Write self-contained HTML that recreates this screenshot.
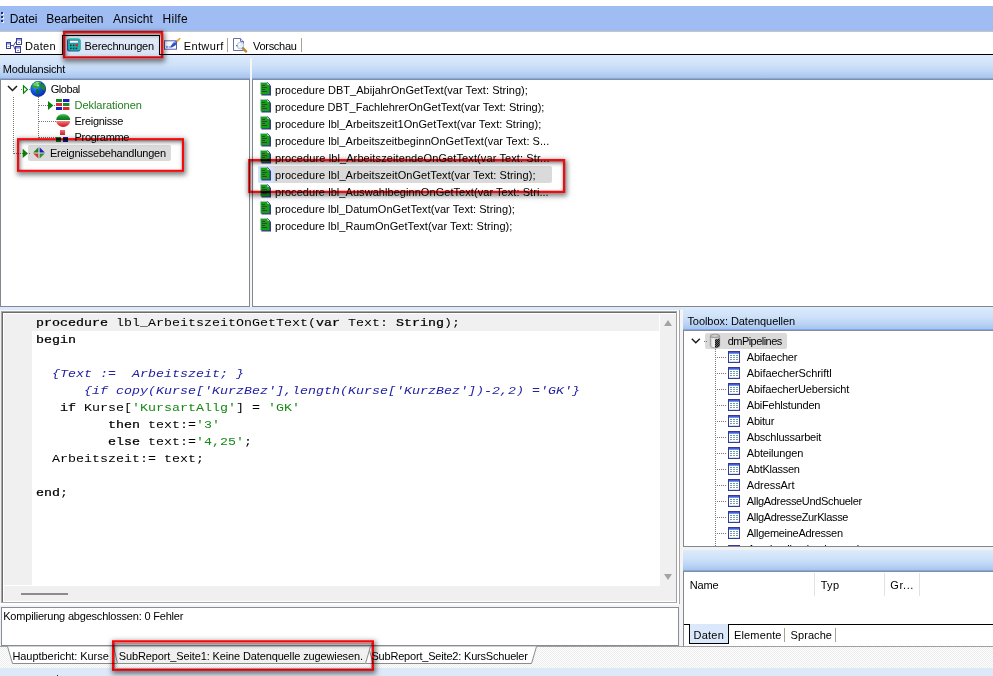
<!DOCTYPE html>
<html>
<head>
<meta charset="utf-8">
<title>Berechnungen</title>
<style>
*{box-sizing:border-box;margin:0;padding:0}
html,body{width:993px;height:676px;overflow:hidden;background:#fff}
body{position:relative;font-family:"Liberation Sans",sans-serif;font-size:11px;color:#000}
.a{position:absolute}
.t{position:absolute;white-space:nowrap;line-height:16px;height:16px;font-size:11px}
.hdr{position:absolute;background:linear-gradient(#deecfd 0%,#d7e8fb 14%,#cfe2f9 40%,#bdd5f5 70%,#a9c7f0 92%,#a3c2ef 95.5%,#7fa9ea 96%,#7fa9ea 100%);border-bottom:1px solid #8a8c94}
.dots{background-image:conic-gradient(#ececec 25%,#fff 0 50%,#ececec 0 75%,#fff 0);background-size:2px 2px}
.code{position:absolute;left:36px;white-space:pre;font-family:"Liberation Mono",monospace;font-size:13.33px;line-height:17px;height:17px;color:#000;transform:scaleY(.86);transform-origin:0 12.5px}
.k{-webkit-text-stroke:.28px #000}
.c{color:#2222a4;font-style:italic}
.s{color:#158a15}
.vd{position:absolute;width:1px;background-image:linear-gradient(#7a7a7a 50%,transparent 50%);background-size:1px 2px}
.hd{position:absolute;height:1px;background-image:linear-gradient(90deg,#7a7a7a 50%,transparent 50%);background-size:2px 1px}
.sh{position:absolute;box-shadow:1px 2px 5px 1px rgba(0,0,0,.5)}
.ish{position:absolute;box-shadow:inset 1px 2px 4px rgba(0,0,0,.55)}
.in{position:absolute}
</style>
</head>
<body>

<!-- ===== menu bar ===== -->
<div class="a" style="left:0;top:6px;width:993px;height:25px;background:#9fbdf3"></div>
<div class="a" style="left:0;top:31px;width:993px;height:1px;background:#c9c6c0"></div>
<div class="a" style="left:2px;top:13px;width:2px;height:2px;background:#eef3fd"></div><div class="a" style="left:1px;top:12px;width:2px;height:2px;background:#1f2f70"></div>
<div class="a" style="left:2px;top:17px;width:2px;height:2px;background:#eef3fd"></div><div class="a" style="left:1px;top:16px;width:2px;height:2px;background:#1f2f70"></div>
<div class="a" style="left:2px;top:21px;width:2px;height:2px;background:#eef3fd"></div><div class="a" style="left:1px;top:20px;width:2px;height:2px;background:#1f2f70"></div>
<div class="t" style="left:9.7px;top:10.6px;letter-spacing:-0.075px;font-size:12px">Datei</div><div class="t" style="left:46.3px;top:10.6px;letter-spacing:-0.089px;font-size:12px">Bearbeiten</div><div class="t" style="left:113px;top:10.6px;letter-spacing:0.1px;font-size:12px">Ansicht</div><div class="t" style="left:162.5px;top:10.6px;letter-spacing:0.275px;font-size:12px">Hilfe</div>

<!-- ===== toolbar ===== -->
<div class="a" style="left:0;top:54px;width:993px;height:1px;background:#000"></div>
<!-- Daten icon -->
<svg class="a" style="left:5px;top:37px" width="18" height="17" viewBox="0 0 18 17">
 <path d="M6 8.5H8.5L11 4.5M8.5 8.5L10 12.5" stroke="#4a4a8a" stroke-width="1" fill="none"/>
 <rect x="1.5" y="5.5" width="4" height="6" fill="#fff" stroke="#3c3c96"/><rect x="2" y="6" width="3" height="1.6" fill="#8c9be0"/><rect x="2.5" y="9" width="2" height="1" fill="#7e93dc"/>
 <rect x="11.5" y="1.5" width="5" height="6" fill="#fff" stroke="#3c3c96"/><rect x="12" y="2" width="4" height="1.6" fill="#8c9be0"/><rect x="13" y="5" width="2" height="1" fill="#7e93dc"/>
 <rect x="10.5" y="9.5" width="5" height="6" fill="#fff" stroke="#3c3c96"/><rect x="11" y="10" width="4" height="1.6" fill="#8c9be0"/><rect x="12" y="13" width="2" height="1" fill="#7e93dc"/>
</svg>
<div class="t" style="left:25px;top:38px;letter-spacing:0.3px">Daten</div>
<!-- selected tab Berechnungen -->
<div class="a" style="left:62px;top:35px;width:98px;height:20px;border:1px solid #000;border-bottom:0;background:linear-gradient(#e3ebf9,#d9e3f5)"></div>
<!-- calc icon -->
<svg class="a" style="left:66px;top:38px" width="15" height="14" viewBox="0 0 15 14">
 <rect x="1" y="0.8" width="13.4" height="12.7" rx="2" fill="#2f4a9a"/>
 <rect x="2" y="0.6" width="12.6" height="11.9" rx="1.8" fill="#17b9b1"/>
 <rect x="3.4" y="2.4" width="9" height="2.6" fill="#fff" stroke="#3a4a8a" stroke-width=".5"/>
 <g fill="#1a2a44"><rect x="4" y="6.6" width="1.6" height="1.6"/><rect x="6.8" y="6.6" width="1.6" height="1.6"/><rect x="4" y="9.6" width="1.6" height="1.6"/><rect x="6.8" y="9.6" width="1.6" height="1.6"/><rect x="9.6" y="9.6" width="1.6" height="1.6"/></g>
 <rect x="9.4" y="6.2" width="2.6" height="2.2" fill="#f01818"/>
</svg>
<div class="t" style="left:84.6px;top:38px;letter-spacing:-0.182px">Berechnungen</div>
<!-- Entwurf icon -->
<svg class="a" style="left:163px;top:37px" width="18" height="15" viewBox="0 0 18 15">
 <rect x="1.5" y="3.8" width="12" height="8.4" fill="#fff" stroke="#5a5cae"/>
 <rect x="3" y="9" width="1.8" height="1.8" fill="#5aa0e0"/><rect x="5.6" y="9" width="1.6" height="1.8" fill="#9ac4ee"/>
 <path d="M6.6 10.4 C8 9.6 8.6 7.4 10.4 5.6 C11.6 4.4 13.2 3.8 14.2 4.2 C14.4 5.6 13.6 7.2 12.2 8.4 C10.6 9.8 8.6 10.6 6.6 10.4Z" fill="#2c54cc"/>
 <path d="M10.6 6.2C11.4 5.4 12.4 5 13.2 5" stroke="#9ab4f0" stroke-width=".8" fill="none"/>
 <path d="M13 3.8 L15.8 1.2 L17.2 2.4 L14.4 5.2Z" fill="#f0b030"/>
 <path d="M15.8 1.2 L17.2 2.4 L17.4 1Z" fill="#d07818"/>
</svg>
<div class="t" style="left:183.7px;top:38px;letter-spacing:0.383px">Entwurf</div>
<div class="a" style="left:227px;top:38px;width:1px;height:14px;background:#a8a294"></div>
<!-- Vorschau icon -->
<svg class="a" style="left:232px;top:37px" width="17" height="17" viewBox="0 0 17 17">
 <path d="M1.5 1.5H8.5L11.5 4.5V13.5H1.5Z" fill="#fff" stroke="#6a6cae"/>
 <path d="M8.5 1.5V4.5H11.5" fill="#dfe3f5" stroke="#6a6cae"/>
 <circle cx="8.4" cy="8.6" r="3.4" fill="#dff0fb" stroke="#b9c6dc" stroke-width="1"/>
 <circle cx="7.4" cy="7.6" r="1.1" fill="#fff"/>
 <rect x="4.2" y="8" width="1.2" height="1.2" fill="#555"/>
 <path d="M11 11.4 L14 14.4" stroke="#d08428" stroke-width="2.6" stroke-linecap="round"/>
 <path d="M10.2 10.6 L11.6 12" stroke="#8a8a8a" stroke-width="1.6"/>
</svg>
<div class="t" style="left:253px;top:38px;letter-spacing:-0.286px">Vorschau</div>
<div class="a" style="left:301px;top:38px;width:1px;height:14px;background:#a8a294"></div>

<!-- ===== panel headers ===== -->
<div class="hdr" style="left:0;top:55px;width:993px;height:25px"></div>
<div class="a" style="left:250px;top:58px;width:2px;height:249px;background:#f6f6f6"></div>
<div class="t" style="left:2.8px;top:61px;letter-spacing:-0.209px">Modulansicht</div>

<!-- left tree panel -->
<div class="a" style="left:0;top:80px;width:250px;height:227px;border:1px solid #828790;border-top:0;background:#fff"></div>
<!-- right list panel -->
<div class="a" style="left:252px;top:80px;width:743px;height:227px;border:1px solid #828790;border-top:0;background:#fff"></div>
<!-- splitter strip below -->
<div class="a" style="left:0;top:307px;width:993px;height:4px;background:#dde8f9"></div>

<!-- ===== tree content ===== -->
<svg class="a" style="left:7px;top:85px" width="11" height="7" viewBox="0 0 11 7"><path d="M1 1L5.5 5.5L10 1" stroke="#1a1a1a" stroke-width="1.5" fill="none"/></svg>
<div class="vd" style="left:13px;top:97px;height:57px"></div>
<div class="hd" style="left:14px;top:153px;width:9px"></div>
<div class="hd" style="left:21px;top:89px;width:1px"></div><div class="hd" style="left:29px;top:89px;width:1px"></div>
<svg class="a" style="left:22px;top:84px" width="7" height="11" viewBox="0 0 7 11"><path d="M1.5 1.8V9.2L5.5 5.5Z" fill="#fff" stroke="#008000" stroke-width="1.1"/></svg>
<!-- globe -->
<svg class="a" style="left:30px;top:80px" width="17" height="18" viewBox="0 0 17 18">
 <defs><radialGradient id="gl" cx="36%" cy="34%" r="72%"><stop offset="0" stop-color="#4a9af4"/><stop offset=".5" stop-color="#0c56d8"/><stop offset=".85" stop-color="#0a36b4"/><stop offset="1" stop-color="#0a2a8a"/></radialGradient>
 <clipPath id="gc"><circle cx="8.2" cy="9" r="7.7"/></clipPath></defs>
 <circle cx="8.2" cy="9" r="7.9" fill="url(#gl)"/>
 <g clip-path="url(#gc)">
  <path d="M1.8 6C2.6 3.2 5.4 1.2 8.6 1.2C10.4 1.2 11.2 2.2 10.8 3.6C10.4 5 9.6 5.6 9.4 6.8C9.2 8 8.2 8.8 7.2 8.2C6.2 7.6 5.6 8.4 4.4 8C3.2 7.6 2.2 7 1.8 6Z" fill="#27a82c"/>
  <ellipse cx="5.8" cy="4.2" rx="2.6" ry="1.7" fill="#7fdc74" opacity=".75"/>
  <ellipse cx="7.6" cy="2.6" rx="1.8" ry=".8" fill="#bfe8d0" opacity=".7"/>
  <circle cx="8" cy="5.4" r=".9" fill="#cfdcff"/>
  <path d="M10.8 4.4C12.4 3.4 14.2 4.4 15.2 6.4C15.8 8 15.6 9.6 14.6 10.6C13.6 9.6 12.6 9.8 11.6 9C10.4 8 10.2 5.8 10.8 4.4Z" fill="#1c8a2a"/>
  <path d="M6.4 9.6C7.6 9 9 9.6 9 10.8C9 12.2 8.4 13.6 7.4 14C6.6 13 6 11 6.4 9.6Z" fill="#0b741c"/>
 </g>
</svg>
<div class="t" style="left:50.7px;top:81px;letter-spacing:-0.44px">Global</div>
<div class="vd" style="left:38px;top:97px;height:41px"></div>
<div class="hd" style="left:39px;top:105px;width:9px"></div><div class="hd" style="left:54px;top:105px;width:1px"></div>
<svg class="a" style="left:47px;top:100px" width="7" height="11" viewBox="0 0 7 11"><path d="M1 1V10L6.4 5.5Z" fill="#0a800a"/></svg>
<!-- Deklarationen icon -->
<svg class="a" style="left:56px;top:99px" width="14" height="12" viewBox="0 0 14 12">
 <rect x="0" y="0" width="6" height="3" fill="#1a8a2a"/><rect x="7" y="0" width="6.4" height="3" fill="#1c1cc0"/>
 <rect x="0" y="4" width="6" height="3" fill="#e02828"/><rect x="7" y="4" width="6.4" height="3" fill="#1a8a2a"/>
 <rect x="0" y="8" width="6" height="3" fill="#1c1cc0"/><rect x="7" y="8" width="6.4" height="3" fill="#e02828"/>
</svg>
<div class="t" style="left:74.5px;top:97px;letter-spacing:-0.042px;color:#1f7d1f">Deklarationen</div>
<div class="hd" style="left:39px;top:121px;width:17px"></div>
<!-- Ereignisse icon -->
<svg class="a" style="left:56px;top:113px" width="15" height="15" viewBox="0 0 15 15">
 <defs><linearGradient id="eg" x1="0" y1="0" x2="0" y2="1"><stop offset="0" stop-color="#7fd08a"/><stop offset=".2" stop-color="#1a9a30"/><stop offset=".45" stop-color="#0a7a1a"/><stop offset=".46" stop-color="#fff"/><stop offset=".54" stop-color="#fff"/><stop offset=".55" stop-color="#f08090"/><stop offset=".8" stop-color="#e03a40"/><stop offset="1" stop-color="#c82028"/></linearGradient></defs>
 <ellipse cx="7.2" cy="7.4" rx="7.1" ry="6.6" fill="url(#eg)"/>
</svg>
<div class="t" style="left:74.5px;top:113px;letter-spacing:-0.289px">Ereignisse</div>
<div class="hd" style="left:39px;top:137px;width:17px"></div>
<!-- Programme icon -->
<div class="a" style="left:60px;top:130px;width:5px;height:5px;background:linear-gradient(#f07078,#d02028)"></div>
<div class="t" style="left:74.6px;top:129px;letter-spacing:-0.325px">Programme</div>

<!-- ===== list content ===== -->
<svg width="0" height="0" style="position:absolute"><defs>
 <g id="pi"><path d="M1.4 1.4H8.2L11 4.2V13.6H1.4Z" fill="#37378c"/><path d="M0.5 0.5H7.6L9.5 2.4V12.3H0.5Z" fill="#10a410"/><path d="M0.3 12.4V0.3H7.4" stroke="#c6c2ee" stroke-width=".6" fill="none"/><path d="M7.4 0.5L9.6 2.7H7.4Z" fill="#eeeeff"/><path d="M7.4 0.4L10.4 3.4" stroke="#37378c" stroke-width=".8"/><path d="M2 3.5H5M2 5.5H7M2 7.5H5M2 9.5H7" stroke="#3a3f3a" stroke-width="1"/></g>
 <g id="ti"><rect x="0.5" y="0.5" width="11" height="11" fill="#fff" stroke="#38389a"/><rect x="1" y="1" width="10" height="1" fill="#3a62d4"/><rect x="1" y="2" width="10" height="1" fill="#6f96ea"/><g fill="#8e8e98"><rect x="2" y="4" width="2" height="1"/><rect x="5" y="4" width="2" height="1"/><rect x="8" y="4" width="2" height="1"/><rect x="2" y="8" width="2" height="1"/></g><g fill="#62aaa8"><rect x="5" y="6" width="2" height="1"/><rect x="8" y="6" width="2" height="1"/><rect x="5" y="8" width="2" height="1"/></g><rect x="2" y="6" width="2" height="1" fill="#5f98e4"/><rect x="8" y="8" width="2" height="1" fill="#8a86c8"/><rect x="1" y="10" width="10" height="1" fill="#cfeadb"/></g>
</defs></svg>
<svg class="a" style="left:260px;top:82px" width="12" height="152" viewBox="0 0 12 152">
 <use href="#pi" y="0"/><use href="#pi" y="17"/><use href="#pi" y="34"/><use href="#pi" y="51"/><use href="#pi" y="68"/><use href="#pi" y="102"/><use href="#pi" y="119"/><use href="#pi" y="136"/>
</svg>
<div class="t" style="left:275px;top:82px;letter-spacing:0.037px">procedure DBT_AbijahrOnGetText(var Text: String);</div>
<div class="t" style="left:275px;top:99px;letter-spacing:0.0px">procedure DBT_FachlehrerOnGetText(var Text: String);</div>
<div class="t" style="left:275px;top:116px;letter-spacing:0.057px">procedure lbl_Arbeitszeit1OnGetText(var Text: String);</div>
<div class="t" style="left:275px;top:133px;letter-spacing:0.056px">procedure lbl_ArbeitszeitbeginnOnGetText(var Text: S...</div>
<div class="t" style="left:275px;top:150px;letter-spacing:0.104px">procedure lbl_ArbeitszeitendeOnGetText(var Text: Str...</div>
<div class="t" style="left:275px;top:184px;letter-spacing:0.057px">procedure lbl_AuswahlbeginnOnGetText(var Text: Stri...</div>
<div class="t" style="left:275px;top:201px;letter-spacing:0.037px">procedure lbl_DatumOnGetText(var Text: String);</div>
<div class="t" style="left:275px;top:218px;letter-spacing:0.049px">procedure lbl_RaumOnGetText(var Text: String);</div>

<!-- ===== code editor ===== -->
<div class="a" style="left:0;top:311px;width:683px;height:336px;background:#f0f0f0"></div>
<div class="a" style="left:0;top:310px;width:683px;height:1px;background:#f6f9fe"></div>
<div class="a" style="left:1px;top:311px;width:676px;height:292px;background:#fff;border-left:1px solid #a6a6a6;border-top:1px solid #a6a6a6;border-right:1px solid #a0a0a0;border-bottom:1px solid #a6a6a6"></div>
<div class="a" style="left:2px;top:312px;width:674px;height:1px;background:#6c6c6c"></div>
<div class="a" style="left:2px;top:312px;width:1px;height:290px;background:#6c6c6c"></div>
<div class="a" style="left:4px;top:314px;width:28px;height:271px;background:#f0f0f0"></div>
<div class="a" style="left:4px;top:314px;width:655px;height:17px;background:#f0f0f0"></div>
<div class="a" style="left:660px;top:314px;width:16px;height:273px;background:#f0f0f0"></div>
<div class="a" style="left:4px;top:586px;width:672px;height:15px;background:#f0f0f0"></div>
<div class="a" style="left:0;top:603px;width:679px;height:2px;background:#fff"></div>
<div class="a" style="left:0;top:605px;width:679px;height:2px;background:#f4f4f4"></div>
<div class="a" style="left:21px;top:593px;width:47px;height:2px;background:#8c8c8c"></div>
<svg class="a" style="left:664px;top:320px" width="8" height="6"><path d="M0 6L4 0L8 6Z" fill="#a3a3a3"/></svg>
<svg class="a" style="left:664px;top:574px" width="8" height="6"><path d="M0 0L4 6L8 0Z" fill="#a3a3a3"/></svg>

<div class="code" style="top:314px"><span class="k">procedure</span> lbl_ArbeitszeitOnGetText(<span class="k">var</span> Text: <span class="k">String</span>);</div>
<div class="code" style="top:331px"><span class="k">begin</span></div>
<div class="code c" style="top:365px">  {Text :=  Arbeitszeit; }</div>
<div class="code c" style="top:382px">      {if copy(Kurse['KurzBez'],length(Kurse['KurzBez'])-2,2) ='GK'}</div>
<div class="code" style="top:399px">   <span class="k">if</span> Kurse[<span class="s">'KursartAllg'</span>] = <span class="s">'GK'</span></div>
<div class="code" style="top:416px">         <span class="k">then</span> text:=<span class="s">'3'</span></div>
<div class="code" style="top:433px">         <span class="k">else</span> text:=<span class="s">'4,25'</span>;</div>
<div class="code" style="top:450px">  Arbeitszeit:= text;</div>
<div class="code" style="top:484px"><span class="k">end</span>;</div>

<!-- message box -->
<div class="a" style="left:1px;top:607px;width:678px;height:39px;border:1px solid #868c98;background:#fff"></div>
<div class="t" style="left:3.2px;top:608px;letter-spacing:-0.197px">Kompilierung abgeschlossen: 0 Fehler</div>

<!-- splitter between editor and toolbox -->
<div class="a" style="left:677px;top:311px;width:2px;height:292px;background:#fff"></div>
<div class="a" style="left:679px;top:310px;width:1px;height:294px;background:#a6a6a6"></div>
<div class="a" style="left:680px;top:311px;width:3px;height:336px;background:#f4f4f4"></div>

<!-- ===== toolbox ===== -->
<div class="hdr" style="left:683px;top:307px;width:310px;height:24px"></div>
<div class="t" style="left:687.4px;top:313px;letter-spacing:-0.055px">Toolbox: Datenquellen</div>
<div class="a" style="left:683px;top:331px;width:311px;height:216px;border:1px solid #828790;border-top:0;background:#fff;overflow:hidden">
 <svg class="in" style="left:44px;top:213.5px" width="13" height="13"><use href="#ti"/></svg>
 <div class="t" style="left:63.8px;top:210.4px;letter-spacing:-.2px">Ansdnrellnsdaerkarnenl</div>
</div>
<svg class="a" style="left:691px;top:338px" width="10" height="6" viewBox="0 0 10 6"><path d="M0.8 0.8L4.8 4.8L8.8 0.8" stroke="#1a1a1a" stroke-width="1.4" fill="none"/></svg>
<div class="hd" style="left:704px;top:341px;width:1px"></div>
<div class="a" style="left:705px;top:333px;width:82px;height:16px;background:#dadada;border-radius:2px"></div>
<div class="hd" style="left:706px;top:341px;width:1px"></div>
<!-- cylinder -->
<svg class="a" style="left:709px;top:333px" width="12" height="16" viewBox="0 0 12 16">
 <defs><pattern id="dith" width="2" height="2" patternUnits="userSpaceOnUse"><rect width="1" height="1" fill="#b8b8b8"/><rect x="1" y="1" width="1" height="1" fill="#b8b8b8"/></pattern>
 <linearGradient id="cy" x1="0" y1="0" x2="1" y2="0"><stop offset="0" stop-color="#c4c4c4"/><stop offset=".3" stop-color="#f4f4f4"/><stop offset="1" stop-color="#c9c9c9"/></linearGradient></defs>
 <path d="M1.3 3V12.6C1.3 13.9 3.4 14.8 6 14.8S10.7 13.9 10.7 12.6V3Z" fill="url(#cy)" stroke="#8c8c8c" stroke-width=".7"/>
 <path d="M6 6.4L10.7 5.6V12.6C10.7 13.7 8.8 14.6 6 14.8Z" fill="#111"/>
 <path d="M6 6.4L10.7 5.6V12.6C10.7 13.7 8.8 14.6 6 14.8Z" fill="url(#dith)" opacity=".55"/>
 <ellipse cx="6" cy="3" rx="4.7" ry="1.9" fill="#b4b4b4" stroke="#8c8c8c" stroke-width=".7"/>
 <ellipse cx="6" cy="2.8" rx="3" ry="1" fill="#cfcfcf"/>
</svg>
<div class="t" style="left:727.7px;top:333px;letter-spacing:-0.54px">dmPipelines</div>
<div class="vd" style="left:715px;top:349px;height:197px"></div>
<svg class="a" style="left:716px;top:351px" width="26" height="196" viewBox="0 0 26 196">
 <g stroke="#7a7a7a" stroke-width="1" stroke-dasharray="1 1">
  <path d="M1 6.5H10M1 22.5H10M1 38.5H10M1 54.5H10M1 70.5H10M1 86.5H10M1 102.5H10M1 118.5H10M1 134.5H10M1 150.5H10M1 166.5H10M1 182.5H10"/>
 </g>
 <use href="#ti" x="12" y="0"/><use href="#ti" x="12" y="16"/><use href="#ti" x="12" y="32"/><use href="#ti" x="12" y="48"/><use href="#ti" x="12" y="64"/><use href="#ti" x="12" y="80"/><use href="#ti" x="12" y="96"/><use href="#ti" x="12" y="112"/><use href="#ti" x="12" y="128"/><use href="#ti" x="12" y="144"/><use href="#ti" x="12" y="160"/><use href="#ti" x="12" y="176"/>
</svg>
<div class="t" style="left:746.8px;top:349px;letter-spacing:-0.222px">Abifaecher</div><div class="t" style="left:746.8px;top:365px;letter-spacing:-0.082px">AbifaecherSchriftl</div><div class="t" style="left:746.8px;top:381px;letter-spacing:-0.137px">AbifaecherUebersicht</div><div class="t" style="left:746.8px;top:397px;letter-spacing:-0.215px">AbiFehlstunden</div><div class="t" style="left:746.8px;top:413px;letter-spacing:-0.24px">Abitur</div><div class="t" style="left:746.8px;top:429px;letter-spacing:-0.229px">Abschlussarbeit</div>
<div class="t" style="left:746.8px;top:445px;letter-spacing:-0.16px">Abteilungen</div><div class="t" style="left:746.8px;top:461px;letter-spacing:-0.289px">AbtKlassen</div><div class="t" style="left:746.8px;top:477px;letter-spacing:-0.075px">AdressArt</div><div class="t" style="left:746.8px;top:493px;letter-spacing:-0.329px">AllgAdresseUndSchueler</div><div class="t" style="left:746.8px;top:509px;letter-spacing:-0.347px">AllgAdresseZurKlasse</div><div class="t" style="left:746.8px;top:525px;letter-spacing:-0.276px">AllgemeineAdressen</div>

<!-- lower toolbox: header band + list -->
<div class="a" style="left:683px;top:547px;width:310px;height:3px;background:#f2f2f2"></div>
<div class="hdr" style="left:683px;top:550px;width:310px;height:22px"></div>
<div class="a" style="left:683px;top:572px;width:311px;height:75px;border-left:1px solid #828790;border-bottom:1px solid #a0a0a0;background:#fff"></div>
<div class="t" style="left:689.8px;top:577.4px;letter-spacing:-0.2px">Name</div><div class="t" style="left:820.7px;top:577.4px;letter-spacing:0.3px">Typ</div><div class="t" style="left:890.3px;top:577.4px;letter-spacing:0.575px">Gr...</div>
<div class="a" style="left:814px;top:573px;width:1px;height:23px;background:#e2e2e2"></div>
<div class="a" style="left:884px;top:573px;width:1px;height:23px;background:#e2e2e2"></div>
<div class="a" style="left:919px;top:573px;width:1px;height:23px;background:#e2e2e2"></div>
<div class="a" style="left:684px;top:624px;width:310px;height:1px;background:#000"></div>
<div class="a" style="left:689px;top:624px;width:40px;height:20px;border:1px solid #000;border-top:0;background:#dbe8fb"></div>
<div class="t" style="left:693.5px;top:627px;letter-spacing:0.25px">Daten</div><div class="t" style="left:734px;top:627px;letter-spacing:0.143px">Elemente</div>
<div class="a" style="left:784px;top:628px;width:1px;height:14px;background:#a8a294"></div>
<div class="t" style="left:790.6px;top:627px;letter-spacing:0.067px">Sprache</div>
<div class="a" style="left:835px;top:628px;width:1px;height:14px;background:#a8a294"></div>

<!-- ===== bottom tab strip ===== -->
<div class="a dots" style="left:0;top:647px;width:993px;height:21px"></div>
<div class="a" style="left:0;top:646px;width:683px;height:1px;background:#a2a2a2"></div>
<div class="a" style="left:0;top:668px;width:993px;height:8px;background:#dde8f8"></div>
<div class="a" style="left:57px;top:675px;width:1px;height:1px;background:#222"></div>
<svg class="a" style="left:0;top:646px" width="560" height="19" viewBox="0 0 560 19">
 <path d="M7.5 0.5L12.5 17.5H113.5V0.5Z" fill="#fff"/>
 <path d="M7.5 0.5L12.5 17.5H117" stroke="#8c8c8c" fill="none"/>
 <path d="M370.5 0.5H536.5L531.5 17.5H366Z" fill="#fff"/>
 <path d="M536.5 0.5L531.5 17.5H366" stroke="#8c8c8c" fill="none"/>
 <path d="M368.5 0.5L373 17.5" stroke="#8c8c8c" fill="none"/>
 <path d="M113.5 0.5L117.5 17.5H365.5L370.5 0.5Z" fill="#f1f1f1"/>
 <path d="M113.5 0.5L117.5 17.5H365.5L370.5 0.5" stroke="#8c8c8c" fill="none"/>
</svg>
<div class="t" style="left:12.4px;top:648px;letter-spacing:-0.044px">Hauptbericht: Kurse</div>
<div class="t" style="left:118.8px;top:648px;letter-spacing:-0.128px">SubReport_Seite1: Keine Datenquelle zugewiesen.</div>
<div class="t" style="left:371.4px;top:648px;letter-spacing:-0.19px">SubReport_Seite2: KursSchueler</div>

<!-- selected tree row -->
<div class="a" style="left:28.3px;top:145.1px;width:143px;height:15.7px;background:#dadada;border-radius:2px"></div>
<svg class="a" style="left:22px;top:148px" width="7" height="11" viewBox="0 0 7 11"><path d="M0.7 0.8V10L6 5.4Z" fill="#0a800a"/></svg>
<div class="hd" style="left:29px;top:153px;width:1px"></div>
<svg class="a" style="left:32.5px;top:146.6px" width="12" height="12" viewBox="0 0 12 12">
 <path d="M5.4 0.2V5.4H0.2Z" fill="#138a1e"/><path d="M6.6 0.2V5.4H11.8Z" fill="#1a1ad0"/>
 <path d="M5.4 11.6V6.4H0.2Z" fill="#e03038"/><path d="M6.6 11.6V6.4H11.8Z" fill="#1f9a2a"/>
</svg>
<div class="t" style="left:49.9px;top:145px;letter-spacing:-0.233px">Ereignissebehandlungen</div>
<div class="a" style="left:56px;top:137px;width:5px;height:5px;background:#128a22"></div>
<div class="a" style="left:63px;top:137px;width:5px;height:5px;background:#1a1ac0"></div>

<!-- selected list row -->
<div class="a" style="left:258px;top:166px;width:293.7px;height:17px;background:#dadada;border-radius:2px"></div>
<div class="a" style="left:258px;top:166px;width:16px;height:17px;background:#d2e1f9;border-radius:2px"></div>
<svg class="a" style="left:260px;top:167px" width="12" height="15" viewBox="0 0 12 15"><use href="#pi" y="0"/></svg>
<div class="t" style="left:275px;top:167px;letter-spacing:0.063px">procedure lbl_ArbeitszeitOnGetText(var Text: String);</div>

<!-- ===== red annotation boxes ===== -->
<div class="sh" style="left:62.9px;top:30.8px;width:100.3px;height:27.8px"></div>
<div class="ish" style="left:65.25px;top:33.15px;width:95.60px;height:23.10px"></div>
<svg class="a" style="left:60px;top:28px;mix-blend-mode:multiply" width="106" height="33"><rect x="4.07" y="3.98" width="97.95" height="25.45" fill="none" stroke="#f5090c" stroke-width="2.35"/></svg>

<div class="sh" style="left:17px;top:138.1px;width:167.0px;height:33.8px"></div>
<div class="ish" style="left:19.10px;top:140.20px;width:162.80px;height:29.60px"></div>
<svg class="a" style="left:15px;top:136px;mix-blend-mode:multiply" width="173" height="39"><rect x="3.05" y="3.15" width="164.90" height="31.70" fill="none" stroke="#f5090c" stroke-width="2.1"/></svg>

<div class="sh" style="left:248.1px;top:159.0px;width:317.1px;height:34.0px"></div>
<div class="ish" style="left:250.35px;top:161.25px;width:312.60px;height:29.50px"></div>
<svg class="a" style="left:246px;top:157px;mix-blend-mode:multiply" width="323" height="40"><rect x="3.22" y="3.12" width="314.85" height="31.75" fill="none" stroke="#f5090c" stroke-width="2.25"/></svg>

<div class="sh" style="left:112px;top:640.2px;width:262.0px;height:30.7px"></div>
<div class="ish" style="left:114.40px;top:642.60px;width:257.20px;height:25.90px"></div>
<svg class="a" style="left:110px;top:638px;mix-blend-mode:multiply" width="268" height="36"><rect x="3.20" y="3.40" width="259.60" height="28.30" fill="none" stroke="#f5090c" stroke-width="2.4"/></svg>

</body>
</html>
